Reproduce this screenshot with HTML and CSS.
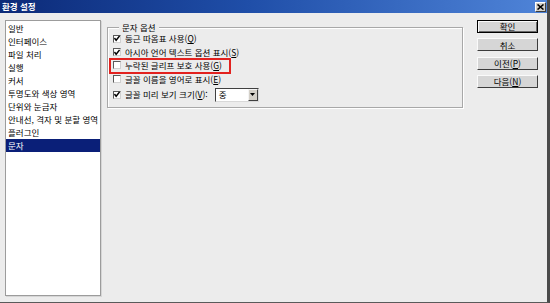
FILE: index.html
```html
<!DOCTYPE html>
<html lang="ko">
<head>
    <meta charset="UTF-8">
    <title>환경 설정</title>
    <link rel="stylesheet" href="styles.css">
</head>
<body>
    <div class="window">
        <!-- Title bar -->
        <div class="titlebar">
            <span class="title">환경 설정</span>
            <span class="close-btn">
                <svg width="7" height="6" viewBox="0 0 7 6"><path d="M0.5 0.5 L6.5 5.5 M6.5 0.5 L0.5 5.5" stroke="#000" stroke-width="1.6"/></svg>
            </span>
        </div>

        <div class="dialog">
            <!-- Category list -->
            <ul class="category-list">
                <li>일반</li>
                <li>인터페이스</li>
                <li>파일 처리</li>
                <li>실행</li>
                <li>커서</li>
                <li>투명도와 색상 영역</li>
                <li>단위와 눈금자</li>
                <li>안내선, 격자 및 분할 영역</li>
                <li>플러그인</li>
                <li class="selected">문자</li>
            </ul>

            <!-- Options -->
            <div class="options">
                <fieldset class="group">
                    <legend>문자 옵션</legend>
                    <div class="option-row">
                        <span class="checkbox checked"><svg width="7" height="7" viewBox="0 0 7 7"><path d="M0.5 3 L2.5 5.5 L6.5 0.5" fill="none" stroke="#000" stroke-width="1.7"/></svg></span>
                        <span>둥근 따옴표 사용(<u>Q</u>)</span>
                    </div>
                    <div class="option-row">
                        <span class="checkbox checked"><svg width="7" height="7" viewBox="0 0 7 7"><path d="M0.5 3 L2.5 5.5 L6.5 0.5" fill="none" stroke="#000" stroke-width="1.7"/></svg></span>
                        <span>아시아 언어 텍스트 옵션 표시(<u>S</u>)</span>
                    </div>
                    <div class="option-row marked">
                        <span class="checkbox"></span>
                        <span>누락된 글리프 보호 사용(<u>G</u>)</span>
                    </div>
                    <div class="option-row">
                        <span class="checkbox"></span>
                        <span>글꼴 이름을 영어로 표시(<u>E</u>)</span>
                    </div>
                    <div class="option-row size-row">
                        <span class="checkbox checked"><svg width="7" height="7" viewBox="0 0 7 7"><path d="M0.5 3 L2.5 5.5 L6.5 0.5" fill="none" stroke="#000" stroke-width="1.7"/></svg></span>
                        <span>글꼴 미리 보기 크기(<u>V</u>):</span>
                        <span class="select">
                            <span class="select-value">중</span>
                            <span class="select-arrow">
                                <svg width="5" height="3" viewBox="0 0 5 3"><path d="M0 0 H5 L2.5 3 Z" fill="#000"/></svg>
                            </span>
                        </span>
                    </div>
                </fieldset>
            </div>

            <!-- Buttons -->
            <div class="buttons">
                <span class="btn default">확인</span>
                <span class="btn">취소</span>
                <span class="btn">이전(<u>P</u>)</span>
                <span class="btn">다음(<u>N</u>)</span>
            </div>
        </div>
    </div>
</body>
</html>
```

FILE: styles.css
```css
/* ====== Base ====== */
* {
    box-sizing: border-box;
    margin: 0;
    padding: 0;
}

body {
    font-family: "Noto Sans CJK KR", "Noto Sans", sans-serif;
    font-size: 8.5px;
    line-height: 1;
    color: #000;
    background-color: #ececec;
}

u {
    text-decoration: underline;
    text-underline-offset: 1px;
}

/* ====== Window frame ====== */
.window {
    width: 550px;
    height: 303px;
    display: flex;
    flex-direction: column;
    background-color: #ececec;
    border-right: 3px solid #4a4a4a;
    border-bottom: 1px solid #5a5a5a;
}

.titlebar {
    height: 13px;
    display: flex;
    align-items: center;
    justify-content: space-between;
    padding: 0 1px 0 2px;
    background: linear-gradient(to right, #0c2a78, #1f4ea8 45%, #4f84d8);
}

.title {
    color: #fff;
    font-weight: bold;
    font-size: 8.5px;
}

.close-btn {
    width: 11px;
    height: 10px;
    display: flex;
    align-items: center;
    justify-content: center;
    background-color: #d4d0c8;
    border: 1px solid;
    border-color: #fff #404040 #404040 #fff;
}

/* ====== Dialog body ====== */
.dialog {
    flex: 1;
    display: flex;
    align-items: flex-start;
    padding: 7px 0 0 5px;
}

.category-list {
    list-style: none;
    width: 96px;
    height: 276px;
    padding-top: 1px;
    background-color: #fff;
    border: 1px solid #9c9c9c;
    box-shadow: 1px 1px 0 #d6d6d6;
}

.category-list li {
    height: 13px;
    line-height: 13px;
    padding-left: 2px;
    white-space: nowrap;
}

.category-list li.selected {
    background-color: #0a1f78;
    color: #fff;
}

/* ====== Options group ====== */
.options {
    width: 356px;
    margin-left: 6px;
}

.group {
    height: 86px;
    margin-top: 2px;
    padding: 0 4px 0 5px;
    border: 1px solid #a8a8a8;
    box-shadow: inset 1px 1px 0 #fff, 1px 1px 0 #fff;
}

.group legend {
    margin-left: 6px;
    padding: 0 3px;
    height: 10px;
    line-height: 10px;
    background-color: #ececec;
}

.option-row {
    height: 13.4px;
    display: flex;
    align-items: center;
    gap: 4px;
    width: fit-content;
    white-space: nowrap;
}

.option-row.size-row {
    height: 16px;
    margin-top: 1px;
}

.option-row.marked {
    position: relative;
}

.option-row.marked::after {
    content: '';
    position: absolute;
    left: -4px;
    right: -9px;
    top: -1px;
    bottom: -2px;
    border: 2px solid #e2221f;
}

.checkbox {
    width: 8px;
    height: 8px;
    flex: none;
    display: flex;
    align-items: center;
    justify-content: center;
    background-color: #fff;
    border: 1px solid;
    border-color: #5a5a5a #d0d0d0 #d0d0d0 #5a5a5a;
}

/* ====== Dropdown ====== */
.select {
    width: 44px;
    height: 14px;
    margin-left: 3px;
    display: flex;
    align-items: stretch;
    background-color: #fff;
    border: 1px solid;
    border-color: #404040 #d8d8d8 #d8d8d8 #404040;
}

.select-value {
    flex: 1;
    display: flex;
    align-items: center;
    padding-left: 3px;
}

.select-arrow {
    width: 10px;
    display: flex;
    align-items: center;
    justify-content: center;
    background-color: #d4d0c8;
    border: 1px solid;
    border-color: #f4f4f4 #404040 #404040 #f4f4f4;
}

/* ====== Buttons ====== */
.buttons {
    width: 61px;
    margin-left: 14px;
    display: flex;
    flex-direction: column;
    gap: 5.3px;
}

.btn {
    height: 13px;
    display: flex;
    align-items: center;
    justify-content: center;
    background-color: #d6d6d6;
    border: 1px solid;
    border-color: #fafafa #3c3c3c #3c3c3c #fafafa;
}

.btn.default {
    border: 1px solid #000;
    box-shadow: inset 1px 1px 0 #fafafa, inset -1px -1px 0 #6a6a6a;
}
```
